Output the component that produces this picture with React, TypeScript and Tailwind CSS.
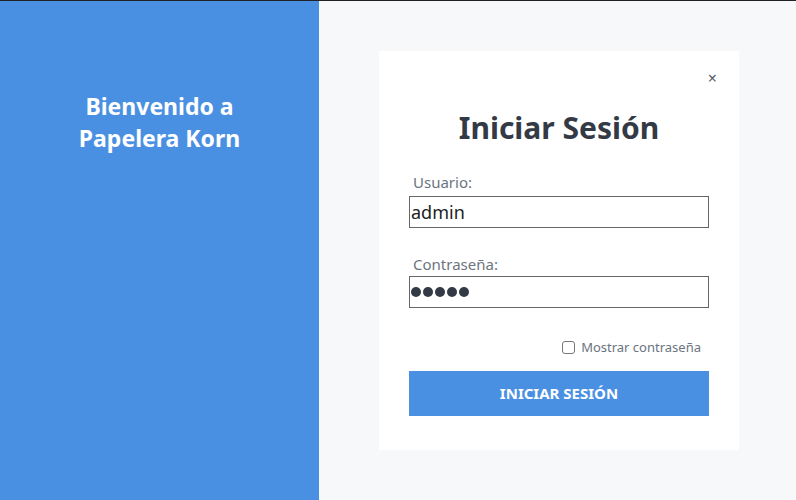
import React from "react";

export default function App() {
  return (
    <div
      className="flex h-[500px] w-[796px] flex-col overflow-hidden bg-[#f7f8fa]"
      style={{ fontFamily: '"Noto Sans", "Open Sans", sans-serif' }}
    >
      <div className="h-px w-full shrink-0 bg-[#202124]" />
      <div className="flex flex-1">
        <div className="flex w-[319px] shrink-0 justify-center bg-[#4a90e2] pt-[89px]">
          <h2 className="text-center text-[23px] font-bold leading-[32px] text-white">
            Bienvenido a
            <br />
            Papelera Korn
          </h2>
        </div>
        <div className="flex flex-1 pl-[60px] pt-[50px]">
          <div className="relative flex h-[399px] w-[360px] flex-col bg-white px-[30px] pt-[57px]">
            <button className="absolute right-[22px] top-[17px] text-[16px] leading-[20px] text-[#555b66]">
              ×
            </button>
            <h1 className="text-center text-[30px] font-bold leading-[40px] text-[#333a45]">
              Iniciar Sesión
            </h1>
            <label className="mt-[24px] pl-[4px] text-[15px] leading-[20px] text-[#6c7480]">
              Usuario:
            </label>
            <input
              readOnly
              value="admin"
              className="mt-[4px] h-[32px] w-[300px] border border-[#666] px-[1px] text-[18px] text-[#222] outline-none"
            />
            <label className="mt-[26px] pl-[4px] text-[15px] leading-[20px] text-[#6c7480]">
              Contraseña:
            </label>
            <div className="mt-[2px] flex h-[32px] w-[300px] items-center gap-[2px] border border-[#666] px-[1px]">
              <span className="h-[10px] w-[10px] rounded-full bg-[#333a45]" />
              <span className="h-[10px] w-[10px] rounded-full bg-[#333a45]" />
              <span className="h-[10px] w-[10px] rounded-full bg-[#333a45]" />
              <span className="h-[10px] w-[10px] rounded-full bg-[#333a45]" />
              <span className="h-[10px] w-[10px] rounded-full bg-[#333a45]" />
            </div>
            <div className="mt-[30px] flex items-center justify-end gap-[6px] pr-[8px]">
              <span className="h-[13px] w-[13px] rounded-[3px] border border-[#767676] bg-white" />
              <span className="text-[13px] leading-[18px] text-[#6c7480]">Mostrar contraseña</span>
            </div>
            <button className="mt-[15px] h-[45px] w-[300px] bg-[#4a90e2] text-[15px] font-bold text-white">
              INICIAR SESIÓN
            </button>
          </div>
        </div>
      </div>
    </div>
  );
}
